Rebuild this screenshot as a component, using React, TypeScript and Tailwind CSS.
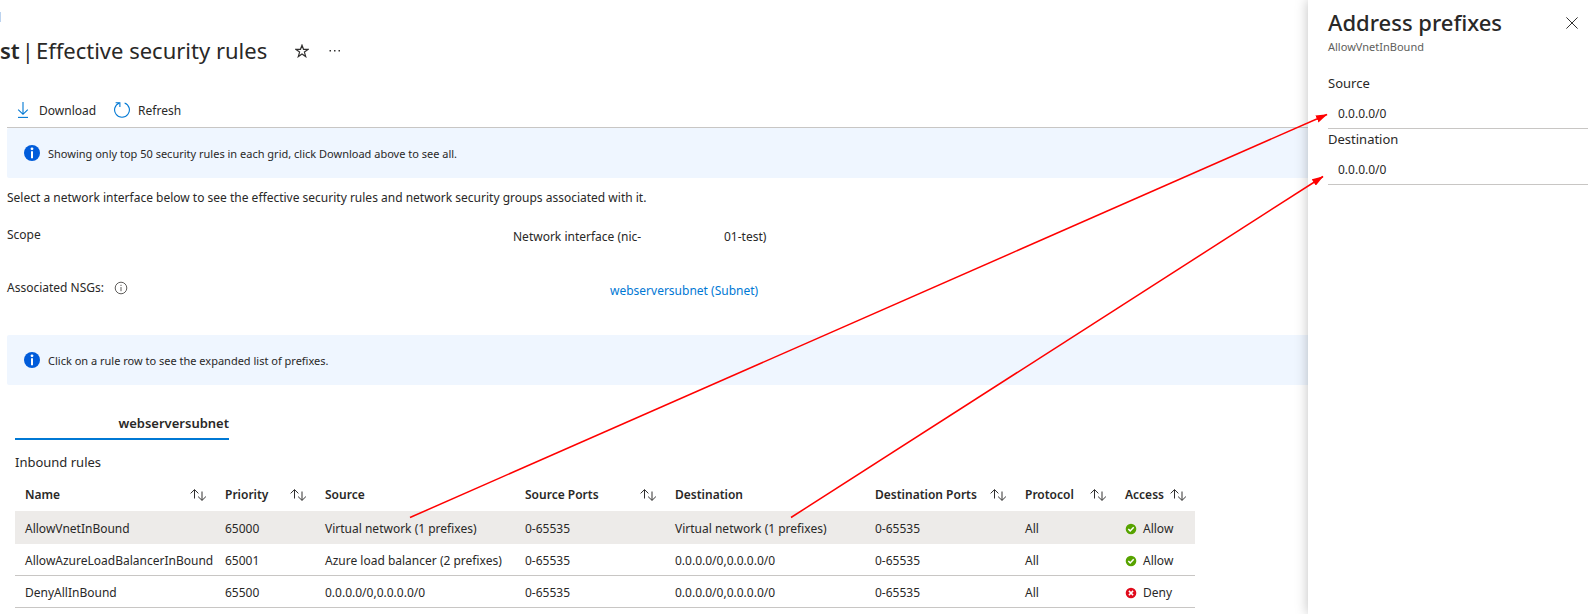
import React from 'react';

type Access = 'Allow' | 'Deny';

interface SecurityRule {
  name: string;
  priority: number;
  source: string;
  sourcePorts: string;
  destination: string;
  destinationPorts: string;
  protocol: string;
  access: Access;
}

interface Column {
  label: string;
  width: string;
  sortable: boolean;
}

const columns: Column[] = [
  { label: 'Name', width: 'w-[200px]', sortable: true },
  { label: 'Priority', width: 'w-[100px]', sortable: true },
  { label: 'Source', width: 'w-[200px]', sortable: false },
  { label: 'Source Ports', width: 'w-[150px]', sortable: true },
  { label: 'Destination', width: 'w-[200px]', sortable: false },
  { label: 'Destination Ports', width: 'w-[150px]', sortable: true },
  { label: 'Protocol', width: 'w-[100px]', sortable: true },
  { label: 'Access', width: 'w-[80px]', sortable: true },
];

const rules: SecurityRule[] = [
  {
    name: 'AllowVnetInBound',
    priority: 65000,
    source: 'Virtual network (1 prefixes)',
    sourcePorts: '0-65535',
    destination: 'Virtual network (1 prefixes)',
    destinationPorts: '0-65535',
    protocol: 'All',
    access: 'Allow',
  },
  {
    name: 'AllowAzureLoadBalancerInBound',
    priority: 65001,
    source: 'Azure load balancer (2 prefixes)',
    sourcePorts: '0-65535',
    destination: '0.0.0.0/0,0.0.0.0/0',
    destinationPorts: '0-65535',
    protocol: 'All',
    access: 'Allow',
  },
  {
    name: 'DenyAllInBound',
    priority: 65500,
    source: '0.0.0.0/0,0.0.0.0/0',
    sourcePorts: '0-65535',
    destination: '0.0.0.0/0,0.0.0.0/0',
    destinationPorts: '0-65535',
    protocol: 'All',
    access: 'Deny',
  },
];

const StarIcon = () => (
  <svg className="w-3.5 h-3.5" viewBox="0 0 14 14" fill="none" stroke="#323130" strokeWidth="1.2">
    <path d="M7 1.2 8.5 5.3 13 5.4 9.4 8.1 10.7 12.6 7 9.9 3.3 12.6 4.6 8.1 1 5.4 5.5 5.3Z" />
  </svg>
);

const MoreIcon = () => (
  <svg className="w-3 h-3.5" viewBox="0 0 12 14" fill="#323130">
    <path d="M.5 6H2V7.5H.5ZM5 6H6.500V7.5H5ZM9.500 6H11V7.5H9.500Z" />
  </svg>
);

const DownloadIcon = () => (
  <svg className="w-4 h-4" viewBox="0 0 16 16" fill="none" stroke="#0078d4" strokeWidth="1.1">
    <path d="M8 0V12M3.2 7.6 8 12.3 12.8 7.6" />
    <path d="M3 15.4H13" />
  </svg>
);

const RefreshIcon = () => (
  <svg className="w-4 h-4" viewBox="0 0 16 16" fill="none" stroke="#0078d4" strokeWidth="1.1">
    <path d="M10.6 .9A7.4 7.4 0 1 1 5.4 .9" />
    <path d="M1.6 .7H5.9V5" />
  </svg>
);

const InfoIcon = () => (
  <svg className="w-4 h-4 shrink-0" viewBox="0 0 16 16">
    <circle cx="8" cy="8" r="8" fill="#015cda" />
    <circle cx="8" cy="3.8" r="1.4" fill="#fff" />
    <path d="M7 6.2H9V13.2H7Z" fill="#fff" />
  </svg>
);

const InfoOutlineIcon = () => (
  <svg className="w-3.5 h-3.5" viewBox="0 0 14 14" fill="none" stroke="#605e5c">
    <circle cx="7" cy="7" r="5.8" />
    <path d="M7 6V10.2M7 3.8V5" />
  </svg>
);

const SortIcon = () => (
  <svg className="w-4 h-3" viewBox="0 0 16 12" fill="none" stroke="#323130">
    <path d="M4.5 9.5V.8M.6 4.4 4.5 .6 8.4 4.4" />
    <path d="M12 2.5V11.2M8.1 7.6 12 11.4 15.9 7.6" />
  </svg>
);

const CloseIcon = () => (
  <svg className="w-3 h-3" viewBox="0 0 12 12" fill="none" stroke="#323130">
    <path d="M.4 .4 11.6 11.6M11.6 .4 .4 11.6" />
  </svg>
);

const AccessIcon: React.FC<{ access: Access }> = ({ access }) => (
  <svg className="w-3 h-3 shrink-0" viewBox="0 0 12 12" fill="none" stroke="#fff" strokeWidth="1.5">
    <circle cx="6" cy="6" r="5.3" fill={access === 'Allow' ? '#57a300' : '#e00b1c'} stroke="none" />
    {access === 'Allow' ? <path d="M3.3 6 5.2 7.9 8.7 4.3" /> : <path d="M3.9 3.9 8.1 8.1M8.1 3.9 3.9 8.1" />}
  </svg>
);

const InfoBanner: React.FC<{ children: React.ReactNode }> = ({ children }) => (
  <div className="flex items-center gap-2 h-[50px] pl-[17px] rounded-l-xs bg-[#eff6ff] text-[11px]">
    <InfoIcon />
    <span className="pt-px">{children}</span>
  </div>
);

const Cell: React.FC<{ selected: boolean; children: React.ReactNode }> = ({ selected, children }) => (
  <td className={`pt-0.5 pl-2.5 whitespace-nowrap ${selected ? 'bg-[#edebe9]' : 'border-b border-[#c8c6c4]'}`}>
    {children}
  </td>
);

const RulesTable = () => (
  <table className="table-fixed border-separate border-spacing-0 w-[1180px] mt-1.5 text-left">
    <thead>
      <tr className="h-[33px]">
        {columns.map((column) => (
          <th key={column.label} className={`${column.width} pl-2.5 font-semibold whitespace-nowrap`}>
            <div className="flex items-center justify-between pr-[9px]">
              {column.label}
              {column.sortable && (
                <button aria-label={`Sort by ${column.label}`}>
                  <SortIcon />
                </button>
              )}
            </div>
          </th>
        ))}
      </tr>
    </thead>
    <tbody>
      {rules.map((rule, index) => {
        const selected = index === 0;
        return (
          <tr key={rule.name} className={selected ? 'h-[33px]' : 'h-8'}>
            <Cell selected={selected}>{rule.name}</Cell>
            <Cell selected={selected}>{rule.priority}</Cell>
            <Cell selected={selected}>{rule.source}</Cell>
            <Cell selected={selected}>{rule.sourcePorts}</Cell>
            <Cell selected={selected}>{rule.destination}</Cell>
            <Cell selected={selected}>{rule.destinationPorts}</Cell>
            <Cell selected={selected}>{rule.protocol}</Cell>
            <Cell selected={selected}>
              <span className="flex items-center gap-1.5">
                <AccessIcon access={rule.access} />
                {rule.access}
              </span>
            </Cell>
          </tr>
        );
      })}
    </tbody>
  </table>
);

const PrefixList: React.FC<{ title: string; prefix: string }> = ({ title, prefix }) => (
  <section>
    <h3 className="text-[13px] leading-5">{title}</h3>
    <p className="h-9 pl-2.5 pt-[11px] border-b border-[#c8c6c4]">{prefix}</p>
  </section>
);

const AddressPanel = () => (
  <aside className="relative w-[284px] shrink-0 pl-5 pr-1 bg-white shadow-[0_0_12px_rgba(0,0,0,0.25)]">
    <div className="flex items-center justify-between pt-1.5 pr-2.5">
      <h2 className="text-[22px] leading-8 font-medium">Address prefixes</h2>
      <button className="pt-0.5" aria-label="Close">
        <CloseIcon />
      </button>
    </div>
    <p className="pt-px text-[11px] leading-4 text-[#605e5c]">AllowVnetInBound</p>
    <div className="mt-[18px]">
      <PrefixList title="Source" prefix="0.0.0.0/0" />
      <PrefixList title="Destination" prefix="0.0.0.0/0" />
    </div>
  </aside>
);

// Red pointers from the selected row to its prefixes in the side panel
const Pointers = () => (
  <svg
    className="absolute top-0 left-0 pointer-events-none"
    width="1592"
    height="614"
    viewBox="0 0 1592 614"
    fill="none"
    stroke="#ff0000"
    strokeWidth="1.5"
  >
    <defs>
      <marker id="head" markerUnits="userSpaceOnUse" markerWidth="12" markerHeight="8" refX="11" refY="4" orient="auto">
        <path d="M0 .2 11.5 4 0 7.8Z" fill="#ff0000" stroke="none" />
      </marker>
    </defs>
    <path d="M410 517.5 1327 114.5" markerEnd="url(#head)" />
    <path d="M791 517.5 1323 176.5" markerEnd="url(#head)" />
  </svg>
);

export default function App() {
  return (
    <div className="relative flex min-h-screen overflow-hidden bg-white font-['Noto_Sans',sans-serif] text-xs leading-5 text-[#292827]">
      <main className="flex-1 min-w-0 pt-3">
        <div className="w-px h-2.5 bg-[#bcd3ef]" />
        <header className="flex items-center mt-3 h-8">
          <h1 className="flex gap-0.5 text-[22px] leading-8 whitespace-nowrap">
            <strong className="font-semibold">st</strong>
            <span>|</span>
            <span>Effective security rules</span>
          </h1>
          <button className="ml-7 pt-0.5" aria-label="Add to favorites">
            <StarIcon />
          </button>
          <button className="ml-5 pt-0.5" aria-label="More">
            <MoreIcon />
          </button>
        </header>

        <div className="pl-[7px]">
          <div className="flex items-center gap-[18px] h-9 mt-[26px] pl-2 border-b border-[#c8c6c4]">
            <button className="flex items-center gap-2">
              <DownloadIcon />
              <span className="pt-0.5">Download</span>
            </button>
            <button className="flex items-center gap-2">
              <RefreshIcon />
              <span className="pt-0.5">Refresh</span>
            </button>
          </div>
          <InfoBanner>Showing only top 50 security rules in each grid, click Download above to see all.</InfoBanner>

          <p className="mt-2.5">
            Select a network interface below to see the effective security rules and network security groups associated with it.
          </p>

          <dl className="mt-[17px]">
            <div className="flex">
              <dt className="w-[506px]">Scope</dt>
              <dd className="flex pt-0.5">
                <span className="w-[211px]">Network interface (nic-</span>
                <span>01-test)</span>
              </dd>
            </div>
            <div className="flex items-start mt-[31px]">
              <dt className="flex items-center gap-2.5 w-[603px]">
                Associated NSGs:
                <InfoOutlineIcon />
              </dt>
              <dd className="pt-[3px]">
                <a href="#webserversubnet" className="text-[#0078d4]">
                  webserversubnet (Subnet)
                </a>
              </dd>
            </div>
          </dl>

          <div className="mt-[34px]">
            <InfoBanner>Click on a rule row to see the expanded list of prefixes.</InfoBanner>
          </div>

          <section className="pl-2 pt-7">
            <button className="block w-[214px] pb-[5px] border-b-2 border-[#0078d4] text-right text-[13px] font-semibold">
              webserversubnet
            </button>
            <h2 className="mt-3 text-[13px]">Inbound rules</h2>
            <RulesTable />
          </section>
        </div>
      </main>
      <AddressPanel />
      <Pointers />
    </div>
  );
}
